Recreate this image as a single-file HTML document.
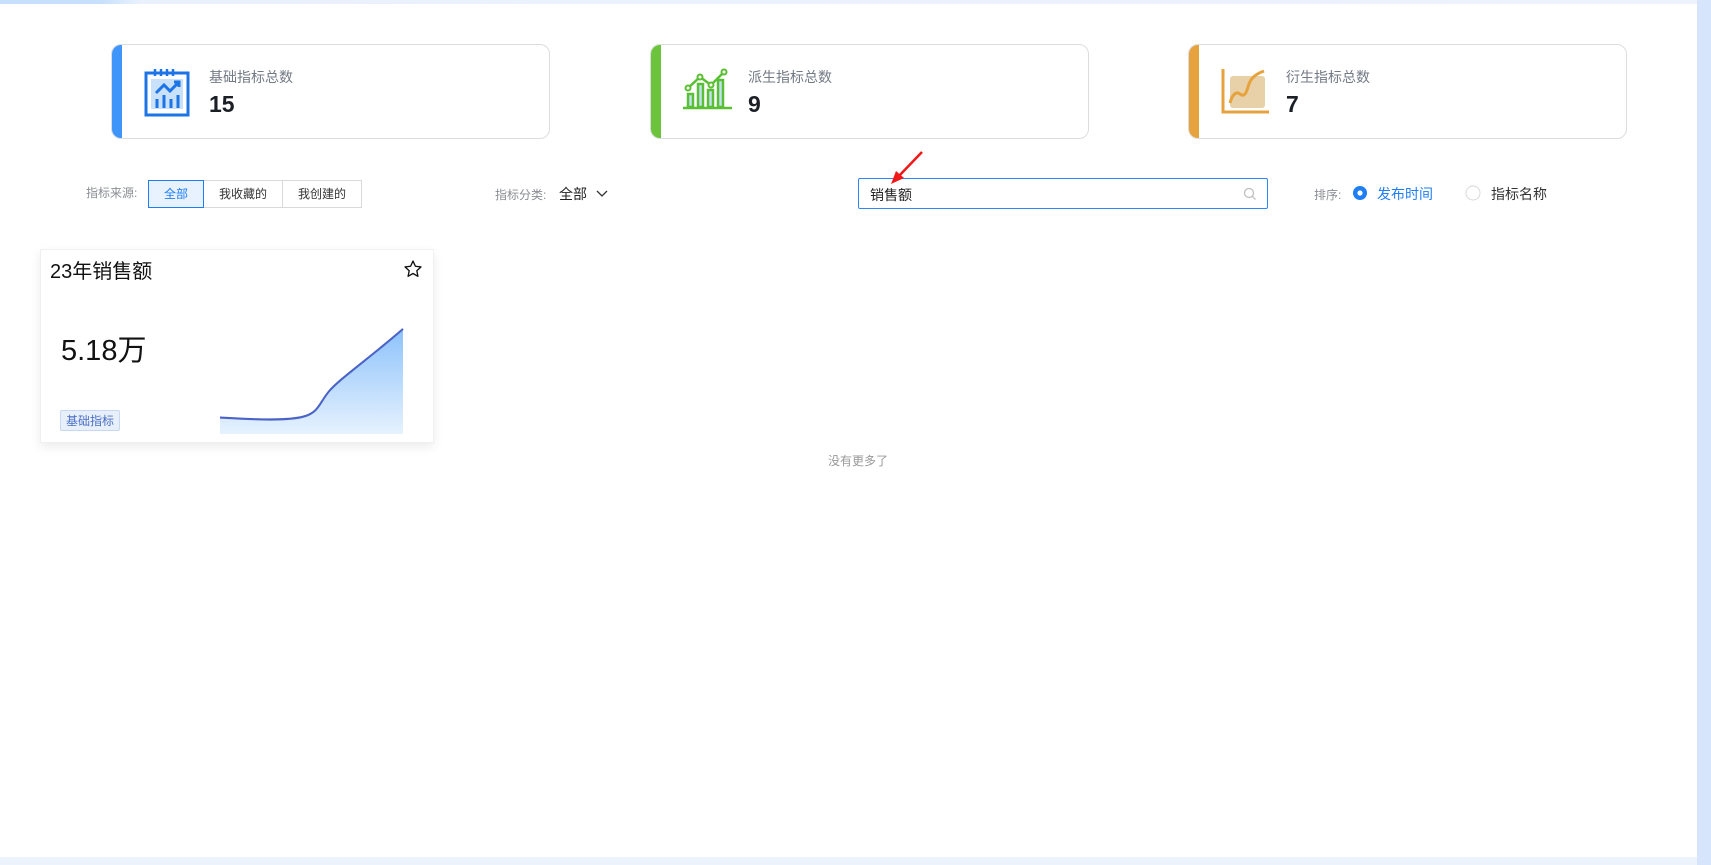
<!DOCTYPE html>
<html><head><meta charset="utf-8"><style>
*{margin:0;padding:0;box-sizing:border-box}
body{width:1711px;height:865px;background:#edf3fd;font-family:"Liberation Sans","Noto Sans CJK SC",sans-serif;position:relative;overflow:hidden}
.topbar{position:absolute;left:0;top:0;width:1711px;height:4px;background:linear-gradient(90deg,#c6e0fd 0,#c6e0fd 100px,#e9f1fd 140px,#edf3fd 100%)}
.rightbar{position:absolute;left:1697px;top:0;width:14px;height:865px;background:#d6e4fc}
.main{position:absolute;left:0;top:4px;width:1697px;height:853px;background:#fff}
.card{position:absolute;top:44px;height:95px;width:439px;border:1px solid #dcdde0;border-radius:10px;overflow:hidden;background:#fff}
.card .bar{position:absolute;left:0;top:0;bottom:0;width:10px}
.card .lab{position:absolute;left:97px;top:22px;font-size:14px;color:#737a85}
.card .num{position:absolute;left:97px;top:46px;font-size:23px;font-weight:bold;color:#1b1f26}
.card svg{position:absolute;left:32px;top:22px}
.abs{position:absolute}
.gray{color:#8a8d93;font-size:12px}
.btns{position:absolute;left:149px;top:180px;height:28px;display:flex;font-size:12px}
.btns div{border:1px solid #d9d9d9;padding:0 15px;line-height:26px;color:#333;margin-left:-1px;background:#fff}
.btns .on{border-color:#1f7ef5;color:#1f7ef5;background:#e8f2fe;position:relative;z-index:1;padding:0 15px}
.search{position:absolute;left:858px;top:178px;width:410px;height:31px;border:1px solid #2f86f6;border-radius:2px}
.mc{position:absolute;left:40px;top:249px;width:394px;height:194px;background:#fff;border:1px solid #f0f0f0;box-shadow:0 4px 10px rgba(0,0,0,.08)}
</style></head><body>
<div class="topbar"></div><div class="rightbar"></div>
<div class="main"></div>

<div class="card" style="left:111px"><div class="bar" style="background:#3f95f9"></div>
<svg width="48" height="50" viewBox="0 0 48 50"><rect x="2" y="6" width="42" height="42" fill="none" stroke="#1c74e6" stroke-width="3"/><rect x="7" y="12" width="32" height="30" fill="#c9e1fb"/><path d="M11 2v7M17 2v7M23 2v7M29 2v7M44 6v8" stroke="#1c74e6" stroke-width="2.5"/><path d="M12 26l8-8 6 6 9-9M30 15h5v5" fill="none" stroke="#1c74e6" stroke-width="3"/><path d="M13 32v9M20 28v13M27 32v9M34 28v13" stroke="#1c74e6" stroke-width="3"/></svg>
<div class="lab">基础指标总数</div><div class="num">15</div></div>

<div class="card" style="left:650px"><div class="bar" style="background:#6cc43c"></div>
<svg width="50" height="44" viewBox="0 0 50 44"><rect x="5" y="27" width="5" height="13" fill="#bfe0f5" stroke="#5bbf34" stroke-width="2.5"/><rect x="15" y="17" width="5" height="23" fill="#bfe0f5" stroke="#5bbf34" stroke-width="2.5"/><rect x="25" y="23" width="5" height="17" fill="#bfe0f5" stroke="#5bbf34" stroke-width="2.5"/><rect x="35" y="13" width="5" height="27" fill="#bfe0f5" stroke="#5bbf34" stroke-width="2.5"/><path d="M0 41h49" stroke="#5bbf34" stroke-width="2.5"/><path d="M5 21l12-11 11 8 12-12" fill="none" stroke="#5bbf34" stroke-width="2.5"/><circle cx="5" cy="21" r="2.5" fill="#fff" stroke="#5bbf34" stroke-width="2"/><circle cx="17" cy="10" r="2.5" fill="#fff" stroke="#5bbf34" stroke-width="2"/><circle cx="28" cy="18" r="2.5" fill="#fff" stroke="#5bbf34" stroke-width="2"/><circle cx="41" cy="5" r="2.5" fill="#fff" stroke="#5bbf34" stroke-width="2"/></svg>
<div class="lab">派生指标总数</div><div class="num">9</div></div>

<div class="card" style="left:1188px"><div class="bar" style="background:#e6a33d"></div>
<svg width="50" height="50" viewBox="0 0 50 50"><rect x="9" y="9" width="35" height="32" rx="3" fill="#e8d0a8"/><path d="M2 2v43h46" fill="none" stroke="#e6a33d" stroke-width="3"/><path d="M9 36c2-8 6-12 10-9s6 0 8-7 5-12 16-16" fill="none" stroke="#e6a33d" stroke-width="3"/></svg>
<div class="lab">衍生指标总数</div><div class="num">7</div></div>

<div class="abs gray" style="left:86px;top:184px">指标来源:</div>
<div class="btns"><div class="on">全部</div><div>我收藏的</div><div>我创建的</div></div>
<div class="abs gray" style="left:495px;top:186px">指标分类:</div>
<div class="abs" style="left:559px;top:184px;font-size:14px;color:#222">全部</div>
<svg class="abs" style="left:596px;top:189px" width="12" height="10"><path d="M1 2l5 5 5-5" fill="none" stroke="#333" stroke-width="1.3"/></svg>

<div class="search"><div class="abs" style="left:11px;top:6px;font-size:14px;color:#222">销售额</div>
<svg class="abs" style="left:384px;top:8px" width="14" height="14"><circle cx="6" cy="6" r="4.5" fill="none" stroke="#bbb" stroke-width="1.2"/><path d="M9.5 9.5l3 3" stroke="#bbb" stroke-width="1.2"/></svg></div>
<svg class="abs" style="left:885px;top:148px" width="45" height="42"><path d="M37 4L12 30" stroke="#f01818" stroke-width="2.5"/><path d="M6 36l5-13 8 7z" fill="#f01818"/></svg>

<div class="abs gray" style="left:1314px;top:186px">排序:</div>
<svg class="abs" style="left:1352px;top:185px" width="16" height="16"><circle cx="8" cy="8" r="7" fill="#1f7ef5"/><circle cx="8" cy="8" r="2.6" fill="#fff"/></svg>
<div class="abs" style="left:1377px;top:184px;font-size:14px;color:#1f7ef5">发布时间</div>
<svg class="abs" style="left:1465px;top:185px" width="16" height="16"><circle cx="8" cy="8" r="7" fill="#fff" stroke="#d9d9d9"/></svg>
<div class="abs" style="left:1491px;top:184px;font-size:14px;color:#333">指标名称</div>

<div class="mc">
<div class="abs" style="left:9px;top:5px;font-size:20px;color:#111">23年销售额</div>
<svg class="abs" style="left:362px;top:9px" width="20" height="20" viewBox="0 0 24 24"><path d="M12 2.5l2.9 6.2 6.7.8-5 4.6 1.3 6.7L12 17.4 6.1 20.8l1.3-6.7-5-4.6 6.7-.8z" fill="none" stroke="#111" stroke-width="1.6" stroke-linejoin="round"/></svg>
<div class="abs" style="left:20px;top:77px;font-size:29px;color:#111">5.18万</div>
<div class="abs" style="left:19px;top:160px;font-size:12px;color:#4a6fc4;background:#e7effb;border:1px solid #c8d8f2;padding:1px 5px;border-radius:2px">基础指标</div>
<svg class="abs" style="left:178px;top:68px" width="186" height="116" viewBox="0 0 186 106" preserveAspectRatio="none"><defs><linearGradient id="g" x1="0" y1="0" x2="0" y2="1"><stop offset="0" stop-color="#8dc2fb"/><stop offset="1" stop-color="#e6f2fe"/></linearGradient></defs><path d="M1 91C40 93 70 94 85 90S100 78 110 67 150 37 184 10V106H1z" fill="url(#g)"/><path d="M1 91C40 93 70 94 85 90S100 78 110 67 150 37 184 10" fill="none" stroke="#4b63c7" stroke-width="2"/></svg>
</div>
<div class="abs gray" style="left:828px;top:452px;color:#999">没有更多了</div>
</body></html>
